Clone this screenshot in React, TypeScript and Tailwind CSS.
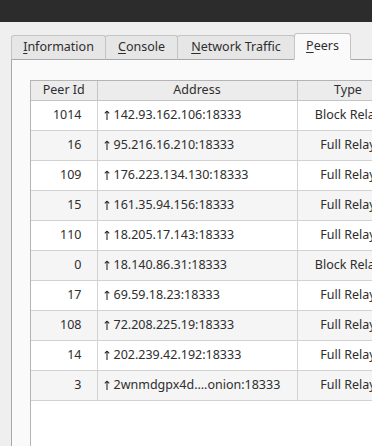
import React from 'react'

interface peerType {
  id: number
  address: string
  type: string
}

const peers: peerType[] = [
  { id: 1014, address: '142.93.162.106:18333', type: 'Block Relay' },
  { id: 16, address: '95.216.16.210:18333', type: 'Full Relay' },
  { id: 109, address: '176.223.134.130:18333', type: 'Full Relay' },
  { id: 15, address: '161.35.94.156:18333', type: 'Full Relay' },
  { id: 110, address: '18.205.17.143:18333', type: 'Full Relay' },
  { id: 0, address: '18.140.86.31:18333', type: 'Block Relay' },
  { id: 17, address: '69.59.18.23:18333', type: 'Full Relay' },
  { id: 108, address: '72.208.225.19:18333', type: 'Full Relay' },
  { id: 14, address: '202.239.42.192:18333', type: 'Full Relay' },
  { id: 3, address: '2wnmdgpx4d….onion:18333', type: 'Full Relay' }
]

const tabs = [
  { first: 'I', rest: 'nformation', w: 'w-[95px]' },
  { first: 'C', rest: 'onsole', w: 'w-[73px]' },
  { first: 'N', rest: 'etwork Traffic', w: 'w-[118px]' }
]

// outbound arrow
const UpArrow = () => (
  <svg width="6" height="10" viewBox="0 0 6 10" className="inline-block align-[-1px] mr-[4px]">
    <path d="M3 1.2V10M3 1 0.8 3.4M3 1 5.2 3.4" stroke="#2e2e2e" strokeWidth="1.1" fill="none" />
  </svg>
)

function App() {
  return (
    <div
      className="w-[372px] h-[446px] overflow-hidden bg-[#efefef] flex flex-col text-[12.5px] text-[#2e2e2e]"
      style={{ fontFamily: '"Noto Sans", "DejaVu Sans", sans-serif' }}
    >
      {/* title bar */}
      <div className="h-[22px] shrink-0 bg-[#2c2c2c]" />

      {/* tabs */}
      <div className="flex items-end pl-[11px] pt-[11px] -mb-px relative z-10">
        {tabs.map(t => (
          <div
            key={t.first}
            className={`${t.w} h-[25px] shrink-0 flex items-center justify-center bg-[#e6e6e6] border border-[#c4c4c4] border-b-[#a8a8a8] -mr-px rounded-t-[3px]`}
          >
            <span>
              <span className="underline underline-offset-2">{t.first}</span>
              {t.rest}
            </span>
          </div>
        ))}
        <div className="w-[57px] h-[27px] shrink-0 flex items-center justify-center bg-[#fafafa] border border-[#c4c4c4] border-b-[#fafafa] rounded-t-[3px]">
          <span>
            <span className="underline underline-offset-2">P</span>eers
          </span>
        </div>
      </div>

      {/* panel */}
      <div className="flex-1 ml-[11px] bg-[#fafafa] border-l border-t border-[#a8a8a8] pl-[18px] pt-[20px] flex flex-col min-h-0">
        <div className="flex-1 bg-white border-l border-t border-[#b4b4b4] w-[400px] overflow-hidden">
          <table className="table-fixed border-collapse w-[400px]">
            <colgroup>
              <col className="w-[66px]" />
              <col className="w-[200px]" />
              <col className="w-[102px]" />
              <col />
            </colgroup>
            <thead>
              <tr className="h-[19px] bg-[#ececec]">
                <th className="font-normal text-center border-r border-b border-[#c4c4c4] p-0">Peer Id</th>
                <th className="font-normal text-center border-r border-b border-[#c4c4c4] p-0">Address</th>
                <th className="font-normal text-center border-r border-b border-[#c4c4c4] p-0">Type</th>
                <th className="border-b border-[#c4c4c4] p-0" />
              </tr>
            </thead>
            <tbody>
              {peers.map((p, i) => (
                <tr key={p.id} className={`h-[30px] ${i % 2 === 1 ? 'bg-[#f5f5f5]' : 'bg-white'}`}>
                  <td className="text-right pr-[15px] border-r border-b border-[#d2d2d2] p-0">{p.id}</td>
                  <td className="text-left pl-[6px] border-r border-b border-[#d2d2d2] whitespace-nowrap">
                    <UpArrow />
                    {p.address}
                  </td>
                  <td className="text-center border-r border-b border-[#d2d2d2] whitespace-nowrap">{p.type}</td>
                  <td className="border-b border-[#d2d2d2]" />
                </tr>
              ))}
            </tbody>
          </table>
        </div>
      </div>
    </div>
  )
}

export default App
